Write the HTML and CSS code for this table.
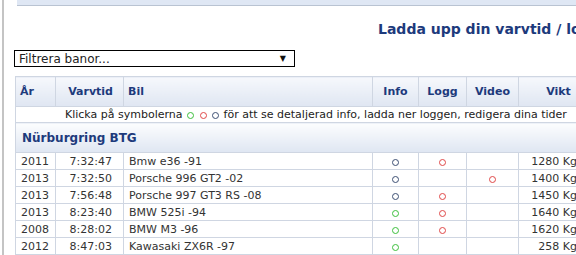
FILE: index.html
```html
<!DOCTYPE html>
<html>
<head>
<meta charset="utf-8">
<link rel="stylesheet" href="styles.css">
</head>
<body>
<div class="frame">
  <div class="topbar"></div>
  <h1 class="title">Ladda upp din varvtid / logg</h1>
  <div class="filter">
    <span class="filter-text">Filtrera banor...</span>
    <span class="filter-arrow">&#9660;</span>
  </div>
  <table class="laps">
    <colgroup>
      <col class="c-year"><col class="c-time"><col class="c-car"><col class="c-info"><col class="c-log"><col class="c-video"><col class="c-weight">
    </colgroup>
    <thead>
      <tr class="head">
        <th class="l">År</th>
        <th class="r">Varvtid</th>
        <th class="l">Bil</th>
        <th>Info</th>
        <th>Logg</th>
        <th>Video</th>
        <th>Vikt</th>
      </tr>
    </thead>
    <tbody>
      <tr class="hint">
        <td colspan="7">Klicka på symbolerna <span class="dot green"></span> <span class="dot red"></span> <span class="dot blue"></span> för att se detaljerad info, ladda ner loggen, redigera dina tider</td>
      </tr>
      <tr class="track">
        <td colspan="7">Nürburgring BTG</td>
      </tr>
      <tr>
        <td>2011</td><td class="r">7:32:47</td><td>Bmw e36 -91</td>
        <td class="c"><span class="dot blue"></span></td><td class="c"><span class="dot red"></span></td><td></td><td class="w">1280 Kg</td>
      </tr>
      <tr>
        <td>2013</td><td class="r">7:32:50</td><td>Porsche 996 GT2 -02</td>
        <td class="c"><span class="dot blue"></span></td><td></td><td class="c"><span class="dot red"></span></td><td class="w">1400 Kg</td>
      </tr>
      <tr>
        <td>2013</td><td class="r">7:56:48</td><td>Porsche 997 GT3 RS -08</td>
        <td class="c"><span class="dot blue"></span></td><td class="c"><span class="dot red"></span></td><td></td><td class="w">1450 Kg</td>
      </tr>
      <tr>
        <td>2013</td><td class="r">8:23:40</td><td>BMW 525i -94</td>
        <td class="c"><span class="dot green"></span></td><td class="c"><span class="dot red"></span></td><td></td><td class="w">1640 Kg</td>
      </tr>
      <tr>
        <td>2008</td><td class="r">8:28:02</td><td>BMW M3 -96</td>
        <td class="c"><span class="dot green"></span></td><td class="c"><span class="dot red"></span></td><td></td><td class="w">1620 Kg</td>
      </tr>
      <tr>
        <td>2012</td><td class="r">8:47:03</td><td>Kawasaki ZX6R -97</td>
        <td class="c"><span class="dot green"></span></td><td></td><td></td><td class="w">258 Kg</td>
      </tr>
    </tbody>
  </table>
</div>
</body>
</html>
```
FILE: styles.css
```css
html, body {
  margin: 0;
  padding: 0;
  background: #fff;
  overflow: hidden;
}
body {
  font-family: "DejaVu Sans", Verdana, sans-serif;
  font-size: 11px;
  color: #333;
  width: 576px;
  height: 255px;
}
.frame {
  margin-left: 2px;
  border-left: 2px solid #c4c4c4;
  padding-left: 10px;
  height: 255px;
  width: 700px;
}
.topbar {
  margin-left: 3px;
  height: 5px;
  background: #dfe7f4;
  border-bottom: 1px solid #b9c3d2;
}
.title {
  margin: 14px 0 0 364px;
  font-size: 14px;
  font-weight: bold;
  color: #1d3a7c;
  white-space: nowrap;
  line-height: 18px;
  height: 18px;
}
.filter {
  margin-top: 12px;
  height: 15px;
  border: 1px solid #000;
  display: flex;
  align-items: center;
  justify-content: space-between;
  padding: 0 8px 0 4px;
  box-sizing: content-box;
  width: 267px;
  font-size: 12px;
  color: #222;
}
.filter-arrow {
  font-size: 8px;
  color: #111;
}
.laps {
  margin: 9px 0 0 1px;
  border-collapse: collapse;
  table-layout: fixed;
  width: 583px;
}
.c-year { width: 40px; }
.c-time { width: 68px; }
.c-car { width: 249px; }
.c-info { width: 46px; }
.c-log { width: 48px; }
.c-video { width: 52px; }
.c-weight { width: 80px; }
.laps th, .laps td {
  border: 1px solid #cfd6e2;
  padding: 0 5px;
  white-space: nowrap;
  overflow: hidden;
}
.laps th {
  height: 29px;
  font-weight: bold;
  color: #1d3a7c;
  text-align: center;
  background: linear-gradient(#f6f8fc, #dfe6f2);
}
.laps th.l { text-align: left; padding-left: 4px; }
.laps th.r { text-align: right; padding-right: 10px; }
.laps td { height: 16px; }
.laps td.r { text-align: right; padding-right: 11px; }
.laps td.w { text-align: right; padding-right: 21px; }
.laps td.c { text-align: center; }
.hint td {
  height: 15px;
  padding-left: 49px;
  color: #222;
}
.track td {
  height: 29px;
  font-weight: bold;
  font-size: 12px;
  color: #1d3a7c;
  padding-left: 6px;
  background: linear-gradient(#fcfdfe, #dfe6f2);
}
.dot {
  display: inline-block;
  width: 5px;
  height: 5px;
  border: 1px solid;
  border-radius: 50%;
  vertical-align: -1px;
}
.hint .dot { margin: 0 1px; }
.dot.green { border-color: #3cbf3c; }
.dot.red { border-color: #e04848; }
.dot.blue { border-color: #3c4f73; }
```
